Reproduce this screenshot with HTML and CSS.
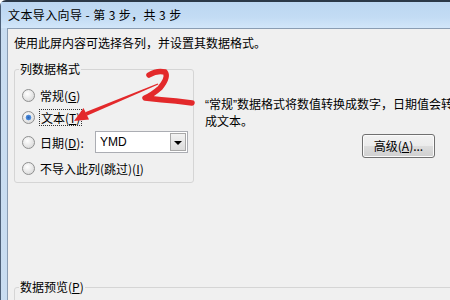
FILE: index.html
```html
<!DOCTYPE html>
<html lang="zh-CN">

<head>
    <meta charset="UTF-8">
    <title>文本导入向导</title>
    <link rel="stylesheet" href="styles.css">
</head>

<body>
    <div class="window">
        <div class="titlebar">文本导入向导 - 第 3 步，共 3 步</div>
        <div class="frame">
            <div class="client">
                <p class="intro">使用此屏内容可选择各列，并设置其数据格式。</p>
                <div class="main">
                    <fieldset class="group">
                        <legend>列数据格式</legend>
                        <div class="opt first"><span class="radio"></span>常规(<u>G</u>)</div>
                        <div class="opt"><span class="radio on"></span><span class="focus">文本(<u>T</u>)</span></div>
                        <div class="opt date">
                            <span class="radio"></span>
                            <span class="date_label">日期(<u>D</u>):</span>
                            <div class="combo">
                                <span class="combo_text">YMD</span>
                                <span class="combo_btn"></span>
                            </div>
                        </div>
                        <div class="opt last"><span class="radio"></span>不导入此列(跳过)(<u>I</u>)</div>
                    </fieldset>
                    <div class="side">
                        <p class="desc"><span class="q">“</span>常规<span class="q">”</span>数据格式将数值转换成数字，日期值会转换成日期，其余数据则转换<br>成文本。</p>
                        <div class="btn">高级(<u>A</u>)...</div>
                    </div>
                </div>
                <fieldset class="group preview">
                    <legend>数据预览(<u>P</u>)</legend>
                </fieldset>
            </div>
        </div>
    </div>

    <!-- hand drawn note on top of the dialog -->
    <svg class="note" width="450" height="300" viewBox="0 0 450 300">
        <path d="M149 75 Q157 70 165 72 Q169 77 160 88 Q152 95 145 98 Q162 100 176 101 L192 103" fill="none" stroke="#e3292b" stroke-width="5.5" stroke-linecap="round" stroke-linejoin="round" />
        <polygon points="157.7,83.4 158.3,84.6 86.8,115.8 85.2,112.2" fill="#e3292b" />
        <polygon points="74,121 83.5,108 89,119.5" fill="#e3292b" />
    </svg>
</body>

</html>
```

FILE: styles.css
```css
* {
    padding: 0;
    margin: 0;
}

body {
    width: 450px;
    height: 300px;
    overflow: hidden;
    position: relative;
    font-family: "Noto Sans CJK SC", "Liberation Sans", sans-serif;
    font-size: 12px;
    color: #000;
    background: #fff;
}

.window {
    height: 300px;
    box-sizing: border-box;
    display: flex;
    flex-direction: column;
    border-top: 2px solid #2b3847;
    border-left: 1px solid #4d6078;
    border-top-left-radius: 6px;
    background: #b9d2ec;
}

.titlebar {
    height: 26px;
    line-height: 26px;
    padding-left: 7px;
    letter-spacing: 0.4px;
    background: linear-gradient(to bottom, #bcd6f1, #c3dcf4 60%, #d2e6f9);
    white-space: nowrap;
}

.frame {
    flex: 1;
    min-height: 0;
    display: flex;
    padding-left: 6px;
    background: linear-gradient(to right, #c9ddf1, #8fb4df 70%, #b9d2ec);
}

.client {
    flex: 1;
    overflow: hidden;
    background: #f0f0f0;
    border-left: 1px solid #8a9db3;
    border-top: 1px solid #8a9db3;
    padding: 6px 0 0 6px;
}

.intro {
    line-height: 16px;
}

.main {
    display: flex;
    align-items: flex-start;
    margin-top: 10px;
}

.group {
    width: 180px;
    box-sizing: border-box;
    border: 1px solid #d5d5d5;
    border-radius: 3px;
    padding: 0 0 3px 0;
}

.group legend {
    margin-left: 4px;
    padding: 0 1px;
    line-height: 16px;
}

.opt {
    display: flex;
    align-items: center;
    height: 22px;
    padding-left: 7px;
    white-space: nowrap;
}

.opt.first {
    margin-top: 7px;
}

.opt.date {
    height: 24px;
    margin-top: 2px;
}

.opt.last {
    margin-top: 3px;
}

.radio {
    flex: none;
    width: 13px;
    height: 13px;
    box-sizing: border-box;
    border-radius: 50%;
    border: 1px solid #8e8f8f;
    background: radial-gradient(circle at 40% 35%, #fff, #d8d8d8 85%);
    margin-right: 5px;
}

.radio.on {
    background: radial-gradient(circle, #2a63b8 0, #4f8fdc 2.5px, transparent 3.2px), radial-gradient(circle at 40% 35%, #fff, #d8d8d8 85%);
}

.focus {
    outline: 1px dotted #333;
    outline-offset: 0;
    padding: 0 1px;
    line-height: 15px;
}

.date_label {
    width: 55px;
}

.combo {
    width: 93px;
    height: 22px;
    box-sizing: border-box;
    border: 1px solid #abadb3;
    background: #fff;
    display: flex;
    justify-content: space-between;
}

.combo_text {
    font-family: "Liberation Sans", sans-serif;
    font-size: 12px;
    line-height: 20px;
    padding-left: 4px;
}

.combo_btn {
    width: 16px;
    margin: 1px;
    box-sizing: border-box;
    border: 1px solid #a8a8a8;
    background: linear-gradient(#f2f2f2, #dcdcdc);
    position: relative;
}

.combo_btn:after {
    content: '';
    position: absolute;
    left: 3px;
    top: 7px;
    border-left: 4px solid transparent;
    border-right: 4px solid transparent;
    border-top: 4px solid #000;
}

.side {
    width: 230px;
    margin-left: 11px;
    display: flex;
    flex-direction: column;
}

.desc {
    margin-top: 35px;
    line-height: 15px;
    white-space: nowrap;
}

.desc .q {
    font-family: "Liberation Sans", sans-serif;
}

.btn {
    align-self: flex-end;
    margin-top: 6px;
    width: 73px;
    height: 24px;
    box-sizing: border-box;
    border: 1px solid #707070;
    border-radius: 3px;
    background: linear-gradient(#f2f2f2 0%, #ebebeb 50%, #dddddd 50%, #cfcfcf 100%);
    box-shadow: inset 0 0 0 1px #fbfbfb;
    text-align: center;
    line-height: 22px;
}

.preview {
    width: auto;
    height: 30px;
    margin: 96px -20px 0 0;
}

.note {
    position: absolute;
    left: 0;
    top: 0;
    pointer-events: none;
}
```
